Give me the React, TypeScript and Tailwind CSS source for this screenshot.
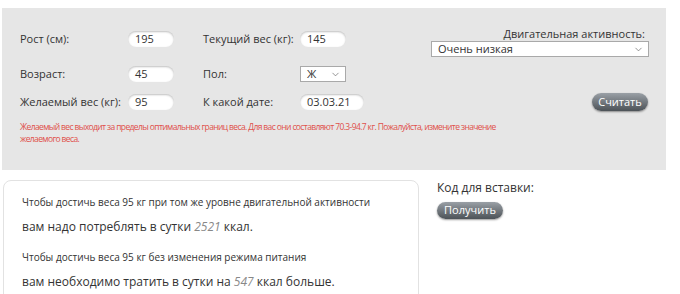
import { ChevronDown } from 'lucide-react';

const font = { fontFamily: '"Open Sans", "DejaVu Sans", sans-serif' };

function Field({ value, width = 'w-[46px]' }: { value: string; width?: string }) {
  return (
    <div
      className={`${width} h-[16px] rounded-full bg-white pl-[7px] text-[11px] leading-[16px] text-[#333] shadow-[inset_0_1px_2px_rgba(0,0,0,0.25)]`}
    >
      {value}
    </div>
  );
}

function Select({ value, className }: { value: string; className: string }) {
  return (
    <div
      className={`${className} flex items-center justify-between border border-[#a9a9a9] bg-white pl-[6px] pr-[4px] text-[11px] text-[#333]`}
    >
      <span>{value}</span>
      <ChevronDown size={11} strokeWidth={1.5} className="text-[#666]" />
    </div>
  );
}

function PillButton({ label, className }: { label: string; className: string }) {
  return (
    <button
      type="button"
      className={`${className} rounded-full bg-gradient-to-b from-[#9aa0a6] to-[#4d5358] text-[11px] text-white shadow-[0_1px_2px_rgba(0,0,0,0.4)]`}
    >
      {label}
    </button>
  );
}

export default function App() {
  return (
    <div className="w-[680px] h-[294px] overflow-hidden bg-white pt-[8px]" style={font}>
      <section className="ml-[2px] w-[664px] h-[162px] bg-[#e6e6e6] pl-[18px] pr-[17px] pt-[23px]">
        <div className="flex">
          <div className="flex flex-col text-[11px] text-[#333]">
            <div className="flex items-center h-[16px]">
              <span className="w-[108px]">Рост (см):</span>
              <Field value="195" />
              <span className="ml-[29px] w-[97px]">Текущий вес (кг):</span>
              <Field value="145" />
            </div>
            <div className="flex items-center h-[16px] mt-[19px]">
              <span className="w-[108px]">Возраст:</span>
              <Field value="45" />
              <span className="ml-[29px] w-[97px]">Пол:</span>
              <Select value="Ж" className="w-[46px] h-[16px]" />
            </div>
            <div className="flex items-center h-[16px] mt-[12px]">
              <span className="w-[108px]">Желаемый вес (кг):</span>
              <Field value="95" />
              <span className="ml-[29px] w-[97px]">К какой дате:</span>
              <Field value="03.03.21" width="w-[64px]" />
            </div>
          </div>
          <div className="ml-auto flex flex-col items-end -mt-[4px]">
            <span className="text-[11px] text-[#333] leading-[14px] mr-[4px]">Двигательная активность:</span>
            <Select value="Очень низкая" className="w-[218px] h-[16px] mt-[0px]" />
            <PillButton label="Считать" className="mt-[36px] w-[56px] h-[18px] mr-[1px]" />
          </div>
        </div>
        <p className="mt-[10px] w-[485px] text-[8.5px] leading-[12px] tracking-[-0.62px] text-[#e0504a]">
          Желаемый вес выходит за пределы оптимальных границ веса. Для вас они составляют 70.3-94.7 кг. Пожалуйста, измените значение желаемого веса.
        </p>
      </section>
      <div className="flex mt-[10px]">
        <div className="ml-[3px] w-[416px] h-[130px] rounded-[8px] border border-[#e2e2e2] pl-[18px] pt-[14px] text-[#333]">
          <p className="text-[10px] leading-[14px]">Чтобы достичь веса 95 кг при том же уровне двигательной активности</p>
          <p className="mt-[9px] text-[12px] leading-[18px]">
            вам надо потреблять в сутки <i className="text-[#888]">2521</i> ккал.
          </p>
          <p className="mt-[14px] text-[10px] leading-[14px]">Чтобы достичь веса 95 кг без изменения режима питания</p>
          <p className="mt-[9px] text-[12px] leading-[18px]">
            вам необходимо тратить в сутки на <i className="text-[#888]">547</i> ккал больше.
          </p>
        </div>
        <div className="ml-[18px]">
          <p className="text-[12px] leading-[16px] text-[#333]">Код для вставки:</p>
          <PillButton label="Получить" className="mt-[6px] w-[66px] h-[17px]" />
        </div>
      </div>
    </div>
  );
}
